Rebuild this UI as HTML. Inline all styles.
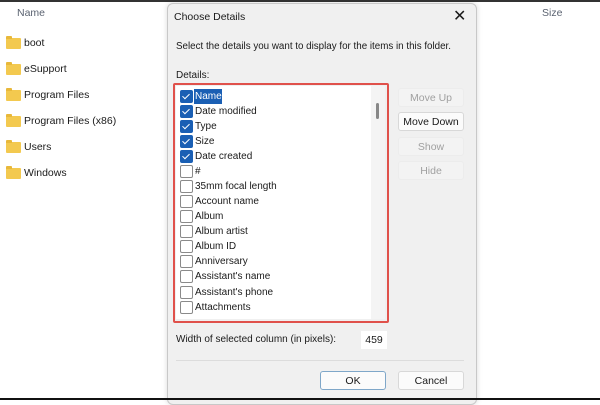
<!DOCTYPE html><html><head><style>
body{margin:0;width:600px;height:400px;background:#fff;position:relative;overflow:hidden;font-family:"Liberation Sans",sans-serif;color:#1a1a1a}
.a{position:absolute}
.f{font-size:10.5px}
.fold{position:absolute;left:6px;width:15px;height:11px;background:#f3c94f;border-radius:1px}
.fold:before{content:"";position:absolute;left:0;top:-2px;width:6px;height:3px;background:#e8b83a;border-radius:1px 1px 0 0}
.row{position:absolute;left:180px;font-size:10px;height:15px;line-height:15px}
.cb{position:absolute;left:0;top:2px;width:11px;height:11px;border:1px solid #8a8a8a;border-radius:2px;background:#fff}
.cb.on{background:#1a5fb4;border-color:#1a5fb4}
.cb.on:after{content:"";position:absolute;left:3px;top:1px;width:3px;height:6px;border:solid #fff;border-width:0 1px 1px 0;transform:rotate(45deg)}
.row span{position:absolute;left:15px;top:1px;white-space:nowrap}
.btn{position:absolute;width:66px;height:19px;line-height:19px;text-align:center;font-size:10.5px;border:1px solid #d8d8d8;background:#fbfbfb;border-radius:3px;box-sizing:border-box}
.dis{color:#a0a0a0;background:#f3f3f3;border-color:#ececec}
</style></head><body>
<div class="a" style="left:0;top:0;width:600px;height:2px;background:#333"></div>
<div class="a f" style="left:17px;top:7px;color:#5a6270">Name</div>
<div class="a f" style="left:542px;top:7px;color:#5a6270">Size</div>
<div class="fold" style="top:38px"></div><div class="a f" style="left:24px;top:37px">boot</div>
<div class="fold" style="top:64px"></div><div class="a f" style="left:24px;top:63px">eSupport</div>
<div class="fold" style="top:90px"></div><div class="a f" style="left:24px;top:89px">Program Files</div>
<div class="fold" style="top:116px"></div><div class="a f" style="left:24px;top:115px">Program Files (x86)</div>
<div class="fold" style="top:142px"></div><div class="a f" style="left:24px;top:141px">Users</div>
<div class="fold" style="top:168px"></div><div class="a f" style="left:24px;top:167px">Windows</div>
<div class="a" style="left:167px;top:3px;width:308px;height:400px;background:#f0f0f0;border:1px solid #c8c8c8;border-radius:6px;box-shadow:0 0 6px rgba(0,0,0,.15)"></div>
<div class="a f" style="left:174px;top:11px">Choose Details</div>
<div class="a" style="left:453px;top:6px;font-size:16px">✕</div>
<div class="a" style="left:176px;top:41px;font-size:9.8px">Select the details you want to display for the items in this folder.</div>
<div class="a" style="left:176px;top:70px;font-size:10px">Details:</div>
<div class="a" style="left:173px;top:83px;width:212px;height:236px;border:2px solid #e0514b;border-radius:2px"></div>
<div class="a" style="left:176px;top:86px;width:209px;height:233px;background:#fff;overflow:hidden">
<div class="a" style="left:195px;top:0;width:14px;height:233px;background:#f4f4f4"></div>
<div class="a" style="left:200px;top:17px;width:3px;height:16px;background:#888;border-radius:2px"></div>
</div>
<div class="a" style="left:194px;top:89px;width:28px;height:15px;background:#1a5fb4"></div>
<div class="row" style="top:88px"><div class="cb on"></div><span style="color:#fff">Name</span></div>
<div class="row" style="top:103px"><div class="cb on"></div><span>Date modified</span></div>
<div class="row" style="top:118px"><div class="cb on"></div><span>Type</span></div>
<div class="row" style="top:133px"><div class="cb on"></div><span>Size</span></div>
<div class="row" style="top:148px"><div class="cb on"></div><span>Date created</span></div>
<div class="row" style="top:163px"><div class="cb"></div><span>#</span></div>
<div class="row" style="top:178px"><div class="cb"></div><span>35mm focal length</span></div>
<div class="row" style="top:193px"><div class="cb"></div><span>Account name</span></div>
<div class="row" style="top:208px"><div class="cb"></div><span>Album</span></div>
<div class="row" style="top:223px"><div class="cb"></div><span>Album artist</span></div>
<div class="row" style="top:238px"><div class="cb"></div><span>Album ID</span></div>
<div class="row" style="top:253px"><div class="cb"></div><span>Anniversary</span></div>
<div class="row" style="top:268px"><div class="cb"></div><span>Assistant's name</span></div>
<div class="row" style="top:284px"><div class="cb"></div><span>Assistant's phone</span></div>
<div class="row" style="top:299px"><div class="cb"></div><span>Attachments</span></div>
<div class="btn dis" style="left:398px;top:88px">Move Up</div>
<div class="btn" style="left:398px;top:112px;color:#1a1a1a">Move Down</div>
<div class="btn dis" style="left:398px;top:137px">Show</div>
<div class="btn dis" style="left:398px;top:161px">Hide</div>
<div class="a" style="left:176px;top:334px;font-size:10px">Width of selected column (in pixels):</div>
<div class="a" style="left:361px;top:331px;width:26px;height:18px;background:#fff;font-size:10.5px;line-height:18px;text-align:center">459</div>
<div class="a" style="left:176px;top:360px;width:288px;height:1px;background:#dcdcdc"></div>
<div class="btn" style="left:320px;top:371px;border-color:#7fa7c9">OK</div>
<div class="btn" style="left:398px;top:371px">Cancel</div>
<div class="a" style="left:0;top:398px;width:600px;height:2px;background:#111"></div>
</body></html>
